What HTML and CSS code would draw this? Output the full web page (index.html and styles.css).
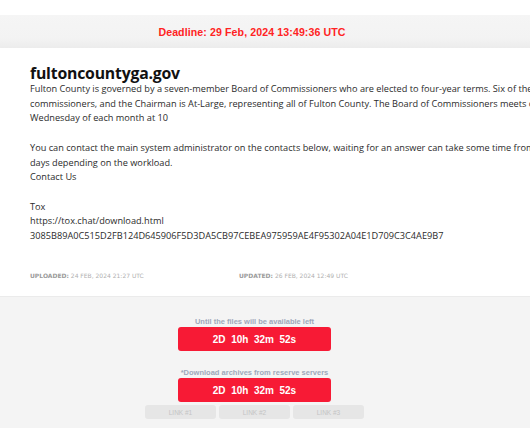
FILE: index.html
```html
<!DOCTYPE html>
<html lang="en">

<head>
    <meta charset="utf-8">
    <meta name="viewport" content="width=device-width, initial-scale=1.0">
    <title>fultoncountyga.gov</title>
    <link rel="stylesheet" href="styles.css">
</head>

<body>
    <header class="deadline">
        <p>Deadline: 29 Feb, 2024 13:49:36 UTC</p>
    </header>

    <section class="card">
        <h1>fultoncountyga.gov</h1>
        <p class="about">
            Fulton County is governed by a seven-member Board of Commissioners who are elected to four-year terms. Six of the members are elected from<br>
            commissioners, and the Chairman is At-Large, representing all of Fulton County. The Board of Commissioners meets on the first and third<br>
            Wednesday of each month at 10<br>
            <br>
            You can contact the main system administrator on the contacts below, waiting for an answer can take some time from several hours to several<br>
            days depending on the workload.<br>
            Contact Us<br>
            <br>
            Tox<br>
            https://tox.chat/download.html<br>
            3085B89A0C515D2FB124D645906F5D3DA5CB97CEBEA975959AE4F95302A04E1D709C3C4AE9B7
        </p>
        <div class="meta">
            <span class="meta-item"><b>UPLOADED:</b> 24 FEB, 2024 21:27 UTC</span>
            <span class="meta-item"><b>UPDATED:</b> 26 FEB, 2024 12:49 UTC</span>
        </div>
    </section>

    <section class="timers">
        <p class="hint">Until the files will be available left</p>
        <div class="counter">2D&nbsp; 10h&nbsp; 32m&nbsp; 52s</div>
        <p class="hint second">*Download archives from reserve servers</p>
        <div class="counter">2D&nbsp; 10h&nbsp; 32m&nbsp; 52s</div>
        <div class="links">
            <button class="link">LINK #1</button>
            <button class="link">LINK #2</button>
            <button class="link">LINK #3</button>
        </div>
    </section>
</body></html>
```

FILE: styles.css
```css
/**** GENERAL ****/

body {
    background-color: #ffffff;
    margin: 0;
    overflow: hidden;
    font-family: 'Open Sans', sans-serif;
}

p {
    margin: 0;
}

/**** DEADLINE ****/

.deadline {
    margin-top: 15px;
    height: 33px;
    background: linear-gradient(#f5f5f5, #f3f3f3 70%, #ececec);
    display: flex;
    align-items: center;
    justify-content: center;
    padding-right: 26px;
}

.deadline p {
    font-family: 'Liberation Sans', sans-serif;
    font-weight: bold;
    font-size: 10.6px;
    letter-spacing: 0.1px;
    color: #ff2323;
}

/**** CARD ****/

.card {
    height: 248px;
    padding: 16px 30px 0;
    box-sizing: border-box;
    display: flex;
    flex-direction: column;
}

.card h1 {
    margin: 0;
    font-size: 15.8px;
    letter-spacing: -0.2px;
    line-height: 18px;
    font-weight: bold;
    color: #111111;
}

.about {
    white-space: nowrap;
    font-size: 9.2px;
    line-height: 14.7px;
    color: #2b2b2b;
}

.meta {
    margin-top: 28px;
    display: flex;
    font-family: 'DejaVu Sans', sans-serif;
    font-size: 6px;
    color: #b0b0b0;
}

.meta-item {
    width: 209px;
}

.meta b {
    color: #9a9a9a;
}

/**** TIMERS ****/

.timers {
    background-color: #f4f4f4;
    border-top: 1px solid #ebebeb;
    height: 132px;
    box-sizing: border-box;
    padding: 20px 21px 0 0;
    display: flex;
    flex-direction: column;
    align-items: center;
}

.hint {
    font-family: 'Liberation Sans', sans-serif;
    font-weight: bold;
    font-size: 7.5px;
    line-height: 10px;
    color: #9ea8ba;
}

.hint.second {
    margin-top: 17px;
}

.counter {
    width: 153px;
    height: 24px;
    border-radius: 3px;
    background-color: #f71a35;
    color: #ffffff;
    font-family: 'Liberation Sans', sans-serif;
    font-weight: bold;
    font-size: 10px;
    display: flex;
    align-items: center;
    justify-content: center;
}

.links {
    margin-top: 3px;
    display: flex;
    gap: 3px;
}

.link {
    width: 71px;
    height: 14px;
    border: none;
    border-radius: 3px;
    background-color: #e6e6e6;
    color: #c4c4c4;
    font-family: 'Liberation Sans', sans-serif;
    font-size: 6.5px;
    padding: 0;
}
```
